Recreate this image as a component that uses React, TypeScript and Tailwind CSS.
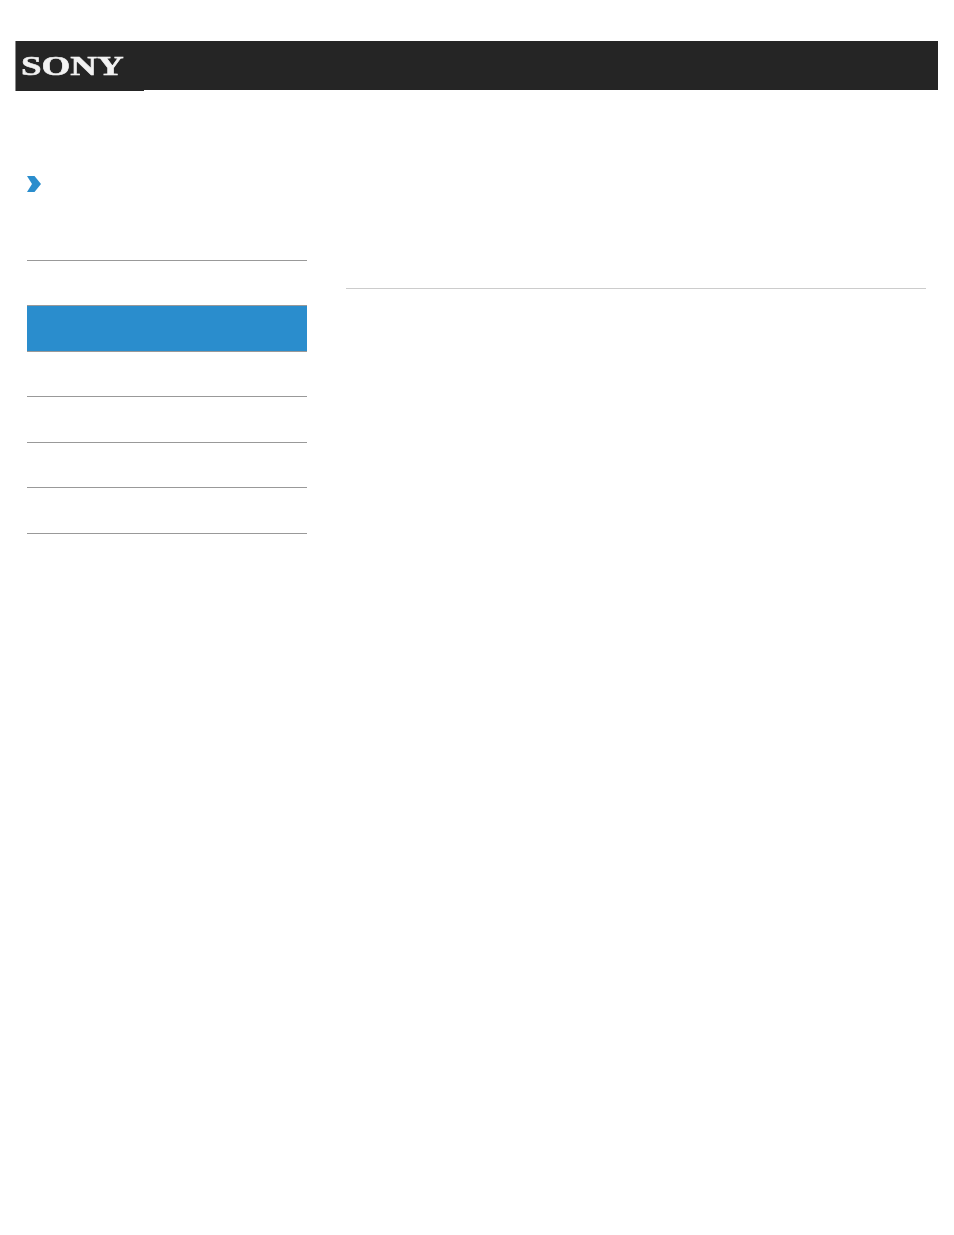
const menuRows = [45, 46, 45, 46];

export default function App() {
  return (
    <main className="min-h-[1235px] bg-white pt-[41px] font-['Liberation_Sans',sans-serif]">
      {/* Header */}
      <header className="ml-[15px] h-[49px] w-[923px] bg-[#252525]">
        <div className="h-[50px] w-[129px] overflow-hidden border-l border-[#8a8a8a] bg-[#252525]">
          <span className="mt-[9px] ml-[5px] block origin-left scale-x-[1.37] font-['Liberation_Serif',serif] text-[27px] leading-[32px] font-bold text-[#f2f2f2] blur-[0.5px] [-webkit-text-stroke:0.5px_#f2f2f2]">
            SONY
          </span>
        </div>
      </header>

      <div className="mt-[86px] ml-[27px] flex">
        {/* Sidebar */}
        <aside className="w-[280px]">
          <svg width="14" height="16" viewBox="0 0 14 16" className="block blur-[0.4px]">
            <path d="M0 0h7.500L14 8l-6.500 8H0l5-8z" fill="#2a8dcd" />
          </svg>
          <div className="mt-[68px] h-[45px] border-t border-[#999999]" />
          <div className="h-[47px] border-y border-[#999999] bg-[#2a8dcd]" />
          {menuRows.map((h, i) => (
            <div key={i} className="border-b border-[#999999]" style={{ height: h }} />
          ))}
        </aside>

        {/* Main content */}
        <section className="ml-[39px] w-[580px] pt-[112px]">
          <div className="h-px bg-[#cccccc]" />
        </section>
      </div>
    </main>
  );
}
